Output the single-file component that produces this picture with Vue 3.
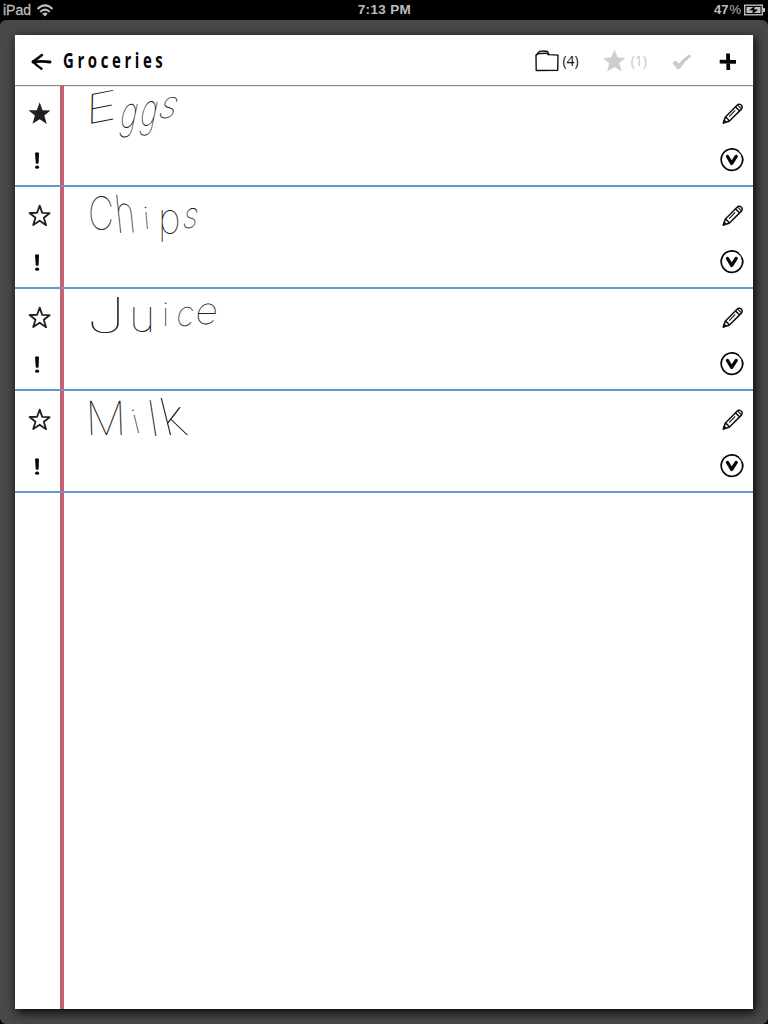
<script setup>
const items = [
  { name: 'Eggs', starred: true, glyphs: [
    { c: 'E', x: 21, y: 40, s: 40, w: 1.4, k: -12, r: -11 },
    { c: 'g', x: 54, y: 43, s: 44, w: 0.68, k: -12, r: 0 },
    { c: 'g', x: 74, y: 41, s: 45, w: 0.66, k: -12, r: 0 },
    { c: 's', x: 92, y: 33, s: 38, w: 0.95, k: -20, r: 0 }
  ] },
  { name: 'Chips', starred: false, glyphs: [
    { c: 'C', x: 24, y: 43, s: 46, w: 0.78, k: 0, r: 0 },
    { c: 'h', x: 53, y: 46, s: 53, w: 0.64, k: 4, r: -2 },
    { c: 'i', x: 80, y: 42, s: 31, w: 1, k: 5, r: 0 },
    { c: 'p', x: 94, y: 46, s: 41, w: 0.95, k: 0, r: 0 },
    { c: 's', x: 117, y: 41, s: 36, w: 0.85, k: -12, r: 0 }
  ] },
  { name: 'Juice', starred: false, glyphs: [
    { c: 'J', x: 22, y: 44, s: 49, w: 1.45, k: 0, r: 0 },
    { c: 'u', x: 65, y: 43, s: 45, w: 1, k: 0, r: 0 },
    { c: 'i', x: 98, y: 37, s: 33, w: 1, k: 0, r: 0 },
    { c: 'c', x: 111, y: 37, s: 35, w: 0.95, k: -8, r: 0 },
    { c: 'e', x: 130, y: 35, s: 37, w: 1.06, k: -8, r: 0 }
  ] },
  { name: 'Milk', starred: false, glyphs: [
    { c: 'M', x: 22, y: 44, s: 47, w: 0.97, k: 2, r: 0 },
    { c: 'i', x: 71, y: 42, s: 33, w: 1, k: 14, r: 0 },
    { c: 'l', x: 87, y: 45, s: 49, w: 0.9, k: 9, r: 0 },
    { c: 'k', x: 101, y: 44, s: 51, w: 1, k: 14, r: 0 }
  ] }
]
const place = g => `translate(${g.x} ${g.y}) rotate(${g.r}) skewX(${g.k}) scale(${g.w} 1)`
</script>

<template>
  <div class="screen">
    <div class="status">
      <div class="side"><span>iPad</span>
        <svg width="18" height="14" viewBox="0 0 18 14" fill="none" stroke="#bebebe" stroke-width="2">
          <path d="M1.5 6Q9-1.2 16.5 6M4.2 8.9Q9 4.3 13.8 8.9" /><path d="M6.3 10.7Q9 8.3 11.7 10.7L9 13.5Z" fill="#bebebe" stroke="none" />
        </svg>
      </div>
      <div class="clock">7:13 PM</div>
      <div class="side right"><span>47<i>%</i></span>
        <svg width="22" height="12" viewBox="0 0 22 12">
          <rect x=".7" y="1.2" width="17.6" height="9.6" fill="none" stroke="#c8c8c8" stroke-width="1.3" />
          <path d="M2.5 3H16.5V9H2.5ZM19 4h2v4h-2z" fill="#bebebe" />
          <path d="M11 1.7 5 6.3 9 6.6 8 10.3 14.2 5.7 10.2 5.3Z" fill="#000" />
        </svg>
      </div>
    </div>
    <div class="desk">
      <div class="paper">
        <header class="bar">
          <svg class="back" width="21" height="18" viewBox="0 0 21 18" fill="none" stroke="#050505" stroke-linecap="round" stroke-linejoin="round">
            <path d="M2 9Q10 7.7 19 9" stroke-width="2.8" /><path d="M11 2Q7.5 5 2 8.5Q6 13 10.5 15.7" stroke-width="2.5" />
          </svg>
          <h1><span>Groceries</span></h1>
          <div class="tools">
            <div class="tool folder">
              <svg width="24" height="22" viewBox="0 0 24 22" fill="none" stroke="#111" stroke-width="1.4" stroke-linejoin="round">
                <path d="M1 5.2 4.5 1.4Q9 .5 12.5 1.5L14 4.6 23 5.1 22.7 20.3 1.2 20.5Z" /><path d="M1 5.3Q2.5 3.3 5 3.5L11 3.2 14 5" />
              </svg><span>(4)</span>
            </div>
            <div class="tool fav">
              <svg width="23" height="22" viewBox="0 0 23 22"><path d="M11.5 0 14.7 7.6 22.5 8.1 16.2 13.1 18.8 21.4 11.4 17 4.2 21.5 6.3 13.2 0 8.2 8 7.6Z" fill="#cdcdcd" /></svg>
              <span>(1)</span>
            </div>
            <svg class="check" width="20" height="16" viewBox="0 0 20 16"><path d="M.5 9Q2.3 6 4.6 7.4L6.8 9.6Q12 4 16.9.5L19.5 2Q13 7 8.2 14.2Q6.6 16 4.8 14.7Z" fill="#cbcbcb" /></svg>
            <svg class="plus" width="18" height="18" viewBox="0 0 18 18" fill="none" stroke="#000" stroke-width="3.7"><path d="M9 .5 9.3 17M.7 8.6 17 8.9" /></svg>
          </div>
        </header>
        <main class="sheet">
          <section v-for="item in items" :key="item.name" class="row">
            <div class="marks">
              <svg class="star" width="23" height="23" viewBox="0 0 23 23">
                <path v-if="item.starred" d="M11.7.2 14.5 8.3 22.5 8.6 16.3 13.6 18.8 22 11.7 17.2 4.5 21.7 6.9 13.4.5 8.3 8.8 8.2Z" fill="#231f20" />
                <path v-else d="M11.7 1.6 14.2 8.9 21.6 9.2 15.8 13.8 18.1 21.2 11.7 16.7 5.2 21 7.5 13.7 1.6 9 9.1 8.8Z" fill="none" stroke="#231f20" stroke-width="1.8" stroke-linejoin="round" />
              </svg>
              <svg class="alert" width="6" height="18" viewBox="0 0 6 18"><path d="M1 1Q3-.3 5 1L4.6 11.3Q3.1 12.3 1.8 11.3Z" /><ellipse cx="3.1" cy="15.2" rx="2" ry="1.6" /></svg>
            </div>
            <div class="ink">
              <svg width="200" height="100" viewBox="0 0 200 100" role="img" :aria-label="item.name">
                <text v-for="(g, i) in item.glyphs" :key="i" :transform="place(g)" :font-size="g.s">{{ g.c }}</text>
              </svg>
            </div>
            <div class="actions">
              <svg class="pencil" width="22" height="22" viewBox="0 0 22 22" fill="none" stroke="#111" stroke-width="1.5" stroke-linejoin="round">
                <path d="M1.5 19.8 3.2 14.3 14.8 2.4Q16.8.4 19.2 2Q21.2 4 19.2 6.4L7.2 18.2Z" /><path d="M3.3 14.4Q6 15 7 18.1M13.4 3.9 17.7 8" /><path d="M16 2.4 19.2 5.6M13.2 7.4 7.2 13.6" stroke-width="1.1" /><path d="M1.3 20.1 2.1 17.2 4 19Z" fill="#111" />
              </svg>
              <svg class="more" width="24" height="24" viewBox="0 0 24 24" fill="none" stroke="#050505">
                <path d="M18.8 3.4A10.7 10.7 0 1 0 22 8" stroke-width="1.7" /><path d="M18.2 3.2Q24 7.8 22.4 14.6" stroke-width="1.1" />
                <path d="M7.5 8.5 11.7 15.4 16.2 8.4" stroke-width="3.3" stroke-linecap="round" stroke-linejoin="round" />
              </svg>
            </div>
          </section>
        </main>
      </div>
    </div>
  </div>
</template>

<style>
body { margin: 0; background: #000; }
</style>
<style scoped>
.screen { width: 768px; height: 1024px; display: flex; flex-direction: column; background: #000; overflow: hidden; font-family: "Liberation Sans", Arial, sans-serif; }
svg { display: block; flex: none; }
.status { height: 20px; flex: none; display: grid; grid-template-columns: 1fr auto 1fr; align-items: center; padding: 0 2px 0 3px; color: #bebebe; font-size: 14px; line-height: 20px; box-sizing: border-box; }
.side { display: flex; align-items: center; gap: 5px; height: 19px; -webkit-text-stroke: .3px #bebebe; }
.right { justify-content: flex-end; gap: 3px; font-weight: bold; font-size: 13px; -webkit-text-stroke: 0; }
.right i { font-style: normal; font-weight: normal; margin-left: 1px; }
.clock { font-weight: bold; font-size: 13.5px; letter-spacing: .35px; height: 20px; }
.desk { flex: 1; box-sizing: border-box; padding: 15px; background: #484848; border-radius: 6px; display: flex; }
.paper { flex: 1; background: #fff; display: flex; flex-direction: column; box-shadow: 2px 3px 9px 1px rgba(0,0,0,.85); }
.bar { height: 50px; flex: none; display: flex; align-items: center; box-shadow: 0 1px 1px #888; z-index: 1; }
.back { margin: 3px 0 0 16px; }
h1 { margin: 0 0 0 11px; width: 110px; font: 700 21px/50px "Open Sans", sans-serif; color: #050505; }
h1 span { display: inline-block; transform: scaleX(.71); transform-origin: 0 50%; letter-spacing: 5.1px; }
.tools { flex: 1; display: flex; align-items: center; justify-content: flex-end; padding-right: 16px; }
.tool { display: flex; align-items: center; font: 14px/20px "Open Sans", sans-serif; }
.tool span { position: relative; top: 1px; }
.tool svg { margin-top: 2px; }
.folder { gap: 3px; color: #111; margin-right: 24px; }
.fav { gap: 5px; color: #c6c6c6; margin-right: 25px; }
.check { margin: 4px 27px 0 0; }
.plus { margin-top: 3px; }
.sheet { flex: 1; background: linear-gradient(90deg, transparent 45px, #bf5a6d 45px, #ce6477 48px, #bf5a6d 49px, transparent 49px); }
.row { height: 102px; box-sizing: border-box; border-bottom: 2px solid #6497d0; display: flex; }
.marks { width: 49px; display: flex; flex-direction: column; }
.star { margin: 17px 0 0 13px; }
.alert { margin: 27px 0 0 19px; fill: #080808; }
.ink { flex: 1; }
.ink svg { overflow: visible; }
.ink text { font-family: Inter, Lato, sans-serif; font-weight: 100; fill: #222; }
.actions { width: 46px; display: flex; flex-direction: column; }
.pencil { margin: 18px 0 0 15px; }
.more { margin: 23px 0 0 13px; }
</style>
